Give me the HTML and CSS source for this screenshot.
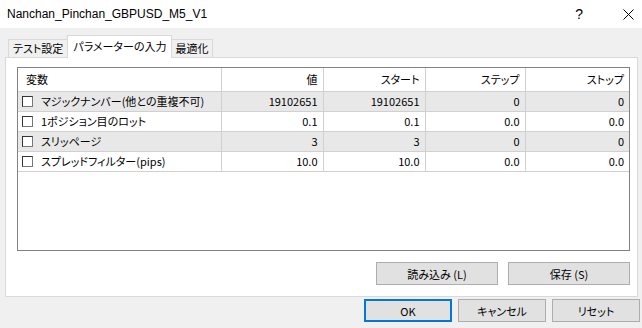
FILE: index.html
```html
<!DOCTYPE html>
<html lang="ja">
<head>
  <meta charset="UTF-8" />
  <title>Nanchan_Pinchan_GBPUSD_M5_V1</title>
  <link rel="stylesheet" href="styles.css">
</head>
<body>
  <div class="titlebar">
    <span class="title">Nanchan_Pinchan_GBPUSD_M5_V1</span>
    <span class="help">?</span>
    <svg class="close" width="11" height="11" viewBox="0 0 11 11">
      <path d="M0.5 0.5 L10.5 10.5 M10.5 0.5 L0.5 10.5" stroke="#000" stroke-width="1" fill="none"/>
    </svg>
  </div>

  <div class="tabs">
    <div class="tab">テスト設定</div>
    <div class="tab active">パラメーターの入力</div>
    <div class="tab">最適化</div>
  </div>

  <div class="panel">
    <div class="grid">
      <table>
        <thead>
          <tr>
            <th class="name">変数</th>
            <th>値</th>
            <th>スタート</th>
            <th>ステップ</th>
            <th>ストップ</th>
          </tr>
        </thead>
        <tbody>
          <tr class="odd">
            <td class="name"><span class="check"></span>マジックナンバー(他との重複不可)</td>
            <td>19102651</td><td>19102651</td><td>0</td><td>0</td>
          </tr>
          <tr>
            <td class="name"><span class="check"></span>1ポジション目のロット</td>
            <td>0.1</td><td>0.1</td><td>0.0</td><td>0.0</td>
          </tr>
          <tr class="odd">
            <td class="name"><span class="check"></span>スリッページ</td>
            <td>3</td><td>3</td><td>0</td><td>0</td>
          </tr>
          <tr>
            <td class="name"><span class="check"></span>スプレッドフィルター(pips)</td>
            <td>10.0</td><td>10.0</td><td>0.0</td><td>0.0</td>
          </tr>
        </tbody>
      </table>
    </div>
    <div class="panel-buttons">
      <button class="btn wide">読み込み (L)</button>
      <button class="btn wide">保存 (S)</button>
    </div>
  </div>

  <div class="dialog-buttons">
    <button class="btn default">OK</button>
    <button class="btn">キャンセル</button>
    <button class="btn">リセット</button>
  </div>
</body>
</html>
```

FILE: styles.css
```css
body {
  margin: 0;
  width: 642px;
  height: 328px;
  overflow: hidden;
  background-color: #f0f0f0;
  font-family: "Noto Sans CJK JP", sans-serif;
  font-size: 11px;
  font-feature-settings: "palt";
  color: #000;
}
.titlebar {
  height: 28px;
  background: white;
  display: flex;
  align-items: center;
  padding-left: 7px;
}
.title {
  flex: 1;
  font-family: "Liberation Sans", sans-serif;
  font-size: 12px;
}
.help {
  font-family: "Liberation Sans", sans-serif;
  font-size: 14px;
  margin-right: 40px;
}
.close {
  margin-right: 8px;
}
.tabs {
  display: flex;
  align-items: flex-end;
  margin-top: 7px;
  padding-left: 8px;
  height: 22px;
}
.tab {
  height: 17px;
  line-height: 17px;
  padding: 0 4px;
  border: 1px solid #d9d9d9;
  border-bottom: none;
  background: #f0f0f0;
}
.tab.active {
  height: 22px;
  line-height: 20px;
  padding: 0 5px;
  margin: 0 -2px -1px -1px;
  background: white;
  position: relative;
  z-index: 1;
}
.panel {
  margin: 0 4px 0 5px;
  height: 229px;
  background: white;
  border: 1px solid #d9d9d9;
  padding: 9px 7px 0 11px;
}
.grid {
  height: 182px;
  border: 1px solid #828282;
  background: white;
}
table {
  border-collapse: collapse;
  width: 100%;
  table-layout: fixed;
}
th, td {
  box-sizing: border-box;
  height: 20px;
  padding: 0 5px 0 0;
  text-align: right;
  font-weight: normal;
  border: 1px solid #d0d0d0;
  border-top: none;
  white-space: nowrap;
  overflow: hidden;
}
th {
  height: 23px;
}
th:first-child, td:first-child {
  border-left: none;
  width: 203px;
}
th:last-child, td:last-child {
  border-right: none;
}
th:nth-child(2), th:nth-child(3) {
  width: 102px;
}
th:nth-child(4) {
  width: 100px;
}
.name {
  text-align: left;
  padding-left: 4px;
}
th.name {
  padding-left: 8px;
}
tr.odd td {
  background: #e8e8e8;
}
.check {
  display: inline-block;
  width: 9px;
  height: 9px;
  border: 1px solid #333;
  border-right-color: #777;
  border-bottom-color: #777;
  margin-right: 8px;
  vertical-align: -1px;
  background: white;
}
.panel-buttons {
  display: flex;
  justify-content: flex-end;
  gap: 10px;
  margin-top: 11px;
}
.btn {
  font-family: "Noto Sans CJK JP", sans-serif;
  font-size: 11px;
  font-feature-settings: "palt";
  height: 23px;
  width: 88px;
  padding: 0;
  background: #e1e1e1;
  border: 1px solid #adadad;
  border-radius: 0;
  color: #000;
}
.btn.wide {
  width: 122px;
}
.btn.default {
  border: 2px solid #0078d7;
}
.dialog-buttons {
  display: flex;
  justify-content: flex-end;
  gap: 6px;
  padding-right: 2px;
  margin-top: 2px;
}
```
